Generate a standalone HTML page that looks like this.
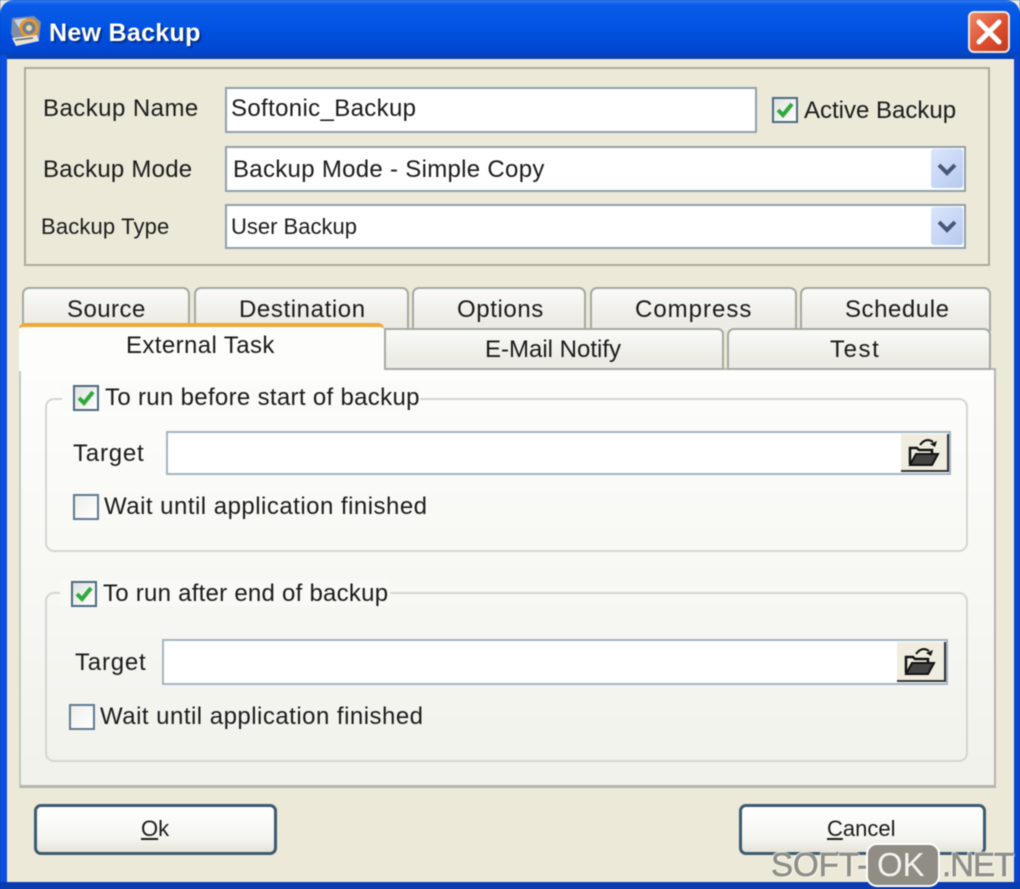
<!DOCTYPE html>
<html><head><meta charset="utf-8"><style>
html,body{margin:0;padding:0;background:#003cc0}
#w{position:relative;width:1020px;height:889px;overflow:hidden;background:#ece9d8;font-family:"Liberation Sans",sans-serif;color:#1a1a1a;filter:blur(.45px)}
#w div,#w svg{position:absolute;box-sizing:border-box}
.t{font-size:24px;line-height:30px;height:30px;white-space:nowrap;letter-spacing:.45px}
.in{background:#fff;border:2px solid #8fa0ad}
.cb{width:26px;height:26px;border:2px solid #4b6b80;background:linear-gradient(135deg,#dfe3df,#fff)}
.tab{background:linear-gradient(#fafaf8,#ecebe4 80%);border:2px solid #a5a9a3;border-bottom:0;border-radius:7px 7px 0 0}
.grp{border:2px solid #d6d6ce;border-radius:9px}
.btn{border:3px solid #3c5a70;border-radius:7px;background:linear-gradient(#fff,#f5f5f0 70%,#e6e4d8)}
.dd{width:32px;background:linear-gradient(135deg,#dbe6fb,#b5c9f0);border-radius:3px}
</style></head><body><div id="w">
<!-- frame -->
<div style="left:0;top:0;width:1020px;height:59px;background:linear-gradient(#2f7cf0 0,#0a5ce8 8%,#0052e0 50%,#0048d4 85%,#0a3fa8 100%);border-radius:14px 14px 0 0"></div>
<div style="left:0;top:55px;width:7px;height:834px;background:#0a50dc"></div>
<div style="right:0;top:55px;width:6px;height:834px;background:#0a46cc"></div>
<div style="left:0;top:882px;width:1020px;height:7px;background:#0a3cb0"></div>
<!-- icon -->
<svg style="left:9px;top:14px" width="34" height="34" viewBox="0 0 34 34"><path d="M3 4 L25 2 L32 8 L30 26 L8 30 L2 20Z" fill="#7f8ea8"/><path d="M5 6 L18 4 L10 14Z" fill="#c8d2e0"/><circle cx="20" cy="14" r="8" fill="#6f7f96" stroke="#e8962a" stroke-width="3"/><circle cx="20" cy="14" r="3" fill="#e8d9a8"/><path d="M3 24 L28 21 L30 27 L7 32Z" fill="#e8e4d8"/><path d="M6 26 L24 24" stroke="#666" stroke-width="1.5"/></svg>
<div class="t" style="left:49px;top:18px;color:#fff;font-weight:bold;font-size:25px;letter-spacing:.3px;text-shadow:2px 2px 1px #0a2f8a">New Backup</div>
<!-- close -->
<div style="left:968px;top:11px;width:42px;height:42px;border:2px solid #f0e8e4;border-radius:6px;background:linear-gradient(135deg,#ee8a66,#dd5030 55%,#c23a1c)"></div>
<svg style="left:968px;top:11px" width="42" height="42" viewBox="0 0 42 42"><path d="M11 11 L31 31 M31 11 L11 31" stroke="#fff" stroke-width="5" stroke-linecap="round"/></svg>
<!-- top panel -->
<div style="left:24px;top:67px;width:966px;height:199px;border:2px solid #aeaa98;background:#ece9d8"></div>
<div class="t" style="left:43px;top:94px">Backup Name</div>
<div class="in" style="left:225px;top:87px;width:532px;height:46px"></div>
<div class="t" style="left:231px;top:94px;letter-spacing:.35px">Softonic_Backup</div>
<div class="cb" style="left:772px;top:97px"></div>
<svg style="left:772px;top:97px" width="26" height="26" viewBox="0 0 26 26"><path d="M6 13 L11 18 L20 7" fill="none" stroke="#2faa3a" stroke-width="4"/></svg>
<div class="t" style="left:804px;top:96px;letter-spacing:0">Active Backup</div>

<div class="t" style="left:43px;top:155px;letter-spacing:.24px">Backup Mode</div>
<div class="in" style="left:225px;top:146px;width:741px;height:46px"></div>
<div class="t" style="left:233px;top:155px;letter-spacing:.3px">Backup Mode - Simple Copy</div>
<div class="dd" style="left:931px;top:149px;height:39px"></div>
<svg style="left:931px;top:149px" width="32" height="39" viewBox="0 0 32 39"><path d="M8 16 L16 24 L24 16" fill="none" stroke="#46587a" stroke-width="4"/></svg>

<div class="t" style="left:41px;top:212px;font-size:22px;letter-spacing:.15px">Backup Type</div>
<div class="in" style="left:225px;top:204px;width:741px;height:45px"></div>
<div class="t" style="left:231px;top:212px;font-size:22px;letter-spacing:0">User Backup</div>
<div class="dd" style="left:931px;top:207px;height:38px"></div>
<svg style="left:931px;top:207px" width="32" height="38" viewBox="0 0 32 38"><path d="M8 15 L16 23 L24 15" fill="none" stroke="#46587a" stroke-width="4"/></svg>

<!-- tab row 1 -->
<div class="tab" style="left:22px;top:287px;width:168px;height:44px"></div>
<div class="tab" style="left:194px;top:287px;width:215px;height:44px"></div>
<div class="tab" style="left:412px;top:287px;width:174px;height:44px"></div>
<div class="tab" style="left:590px;top:287px;width:207px;height:44px"></div>
<div class="tab" style="left:800px;top:287px;width:191px;height:44px"></div>
<div class="t" style="left:67px;top:295px">Source</div>
<div class="t" style="left:239px;top:295px;letter-spacing:.6px">Destination</div>
<div class="t" style="left:457px;top:295px;letter-spacing:.6px">Options</div>
<div class="t" style="left:635px;top:295px;letter-spacing:1px">Compress</div>
<div class="t" style="left:845px;top:295px;letter-spacing:.55px">Schedule</div>
<!-- content -->
<div style="left:19px;top:368px;width:977px;height:420px;background:linear-gradient(#fdfdfc,#f2f2ec);border:2px solid #b4b4aa;border-left-color:#c8c8be;border-bottom-width:3px"></div>
<!-- tab row 2 -->
<div class="tab" style="left:384px;top:328px;width:340px;height:42px;border-bottom:2px solid #a5a9a3;border-top-right-radius:6px;border-top-left-radius:0"></div>
<div class="tab" style="left:727px;top:328px;width:264px;height:42px;border-bottom:2px solid #a5a9a3"></div>
<div class="t" style="left:485px;top:335px;letter-spacing:0">E-Mail Notify</div>
<div class="t" style="left:830px;top:335px;letter-spacing:1.6px">Test</div>
<div style="left:19px;top:323px;width:365px;height:48px;background:#fdfdfc;border-radius:6px 6px 0 0;border-top:4px solid #f0a838"></div>
<div style="left:21px;top:371px;width:361px;height:6px;background:#fdfdfc"></div>
<div class="t" style="left:126px;top:331px;letter-spacing:.4px">External Task</div>

<!-- group 1 -->
<div class="grp" style="left:45px;top:398px;width:923px;height:154px"></div>
<div style="left:62px;top:385px;width:358px;height:26px;background:#fbfbfa"></div>
<div class="cb" style="left:73px;top:385px"></div>
<svg style="left:73px;top:385px" width="26" height="26" viewBox="0 0 26 26"><path d="M6 13 L11 18 L20 7" fill="none" stroke="#2faa3a" stroke-width="4"/></svg>
<div class="t" style="left:105px;top:383px;letter-spacing:.32px">To run before start of backup</div>
<div class="t" style="left:73px;top:439px;letter-spacing:.8px">Target</div>
<div class="in" style="left:166px;top:431px;width:785px;height:44px;border-color:#a3b4c4"></div>
<div style="left:901px;top:434px;width:48px;height:38px;background:#f0ede0;border-right:2px solid #333;border-bottom:2px solid #333"></div>
<svg style="left:906px;top:437px" width="36" height="32" viewBox="0 0 36 32"><path d="M4 27 V11 H11 L13 13 H26 V16" fill="none" stroke="#111" stroke-width="2.5"/><path d="M4 28 L10 17 H32 L26 28Z" fill="#444" stroke="#111" stroke-width="2"/><path d="M14 8 Q20 0 27 5" fill="none" stroke="#111" stroke-width="2"/><path d="M24 7 L31 4 L29 10Z" fill="#111"/></svg>
<div class="cb" style="left:73px;top:494px;border-color:#5d7a90;background:linear-gradient(135deg,#eeeeea,#fff)"></div>
<div class="t" style="left:104px;top:492px;letter-spacing:.48px">Wait until application finished</div>

<!-- group 2 -->
<div class="grp" style="left:45px;top:592px;width:923px;height:170px"></div>
<div style="left:60px;top:580px;width:330px;height:26px;background:#f9f9f6"></div>
<div class="cb" style="left:71px;top:581px"></div>
<svg style="left:71px;top:581px" width="26" height="26" viewBox="0 0 26 26"><path d="M6 13 L11 18 L20 7" fill="none" stroke="#2faa3a" stroke-width="4"/></svg>
<div class="t" style="left:103px;top:579px;letter-spacing:.25px">To run after end of backup</div>
<div class="t" style="left:75px;top:648px;letter-spacing:.8px">Target</div>
<div class="in" style="left:162px;top:639px;width:786px;height:46px;border-color:#a3b4c4"></div>
<div style="left:897px;top:642px;width:49px;height:40px;background:#f0ede0;border-right:2px solid #333;border-bottom:2px solid #333"></div>
<svg style="left:902px;top:646px" width="36" height="32" viewBox="0 0 36 32"><path d="M4 27 V11 H11 L13 13 H26 V16" fill="none" stroke="#111" stroke-width="2.5"/><path d="M4 28 L10 17 H32 L26 28Z" fill="#444" stroke="#111" stroke-width="2"/><path d="M14 8 Q20 0 27 5" fill="none" stroke="#111" stroke-width="2"/><path d="M24 7 L31 4 L29 10Z" fill="#111"/></svg>
<div class="cb" style="left:69px;top:704px;border-color:#5d7a90;background:linear-gradient(135deg,#eeeeea,#fff)"></div>
<div class="t" style="left:100px;top:702px;letter-spacing:.48px">Wait until application finished</div>

<!-- buttons -->
<div class="btn" style="left:34px;top:804px;width:243px;height:51px"></div>
<div class="t" style="left:141px;top:814px;font-size:22px;letter-spacing:0"><u>O</u>k</div>
<div class="btn" style="left:739px;top:804px;width:247px;height:51px"></div>
<div class="t" style="left:827px;top:814px;font-size:22px;letter-spacing:0"><u>C</u>ancel</div>

<!-- watermark -->
<div class="t" style="left:771px;top:848px;font-size:33px;line-height:33px;height:33px;letter-spacing:0;color:#8f8f88;-webkit-text-stroke:.7px #8f8f88;text-shadow:0 0 2px #fff,1px 1px 1px #fff,-1px -1px 1px #fff">SOFT-</div>
<div style="left:866px;top:843px;width:74px;height:44px;background:#8f8d84;border:2px solid #fff;border-radius:11px"></div>
<div class="t" style="left:877px;top:848px;font-size:33px;line-height:33px;height:33px;letter-spacing:0;color:#f4f4f0">OK</div>
<div class="t" style="left:942px;top:848px;font-size:33px;line-height:33px;height:33px;letter-spacing:-1px;color:#8f8f88;-webkit-text-stroke:.7px #8f8f88;text-shadow:0 0 2px #fff,1px 1px 1px #fff,-1px -1px 1px #fff">.NET</div>
</div></body></html>
